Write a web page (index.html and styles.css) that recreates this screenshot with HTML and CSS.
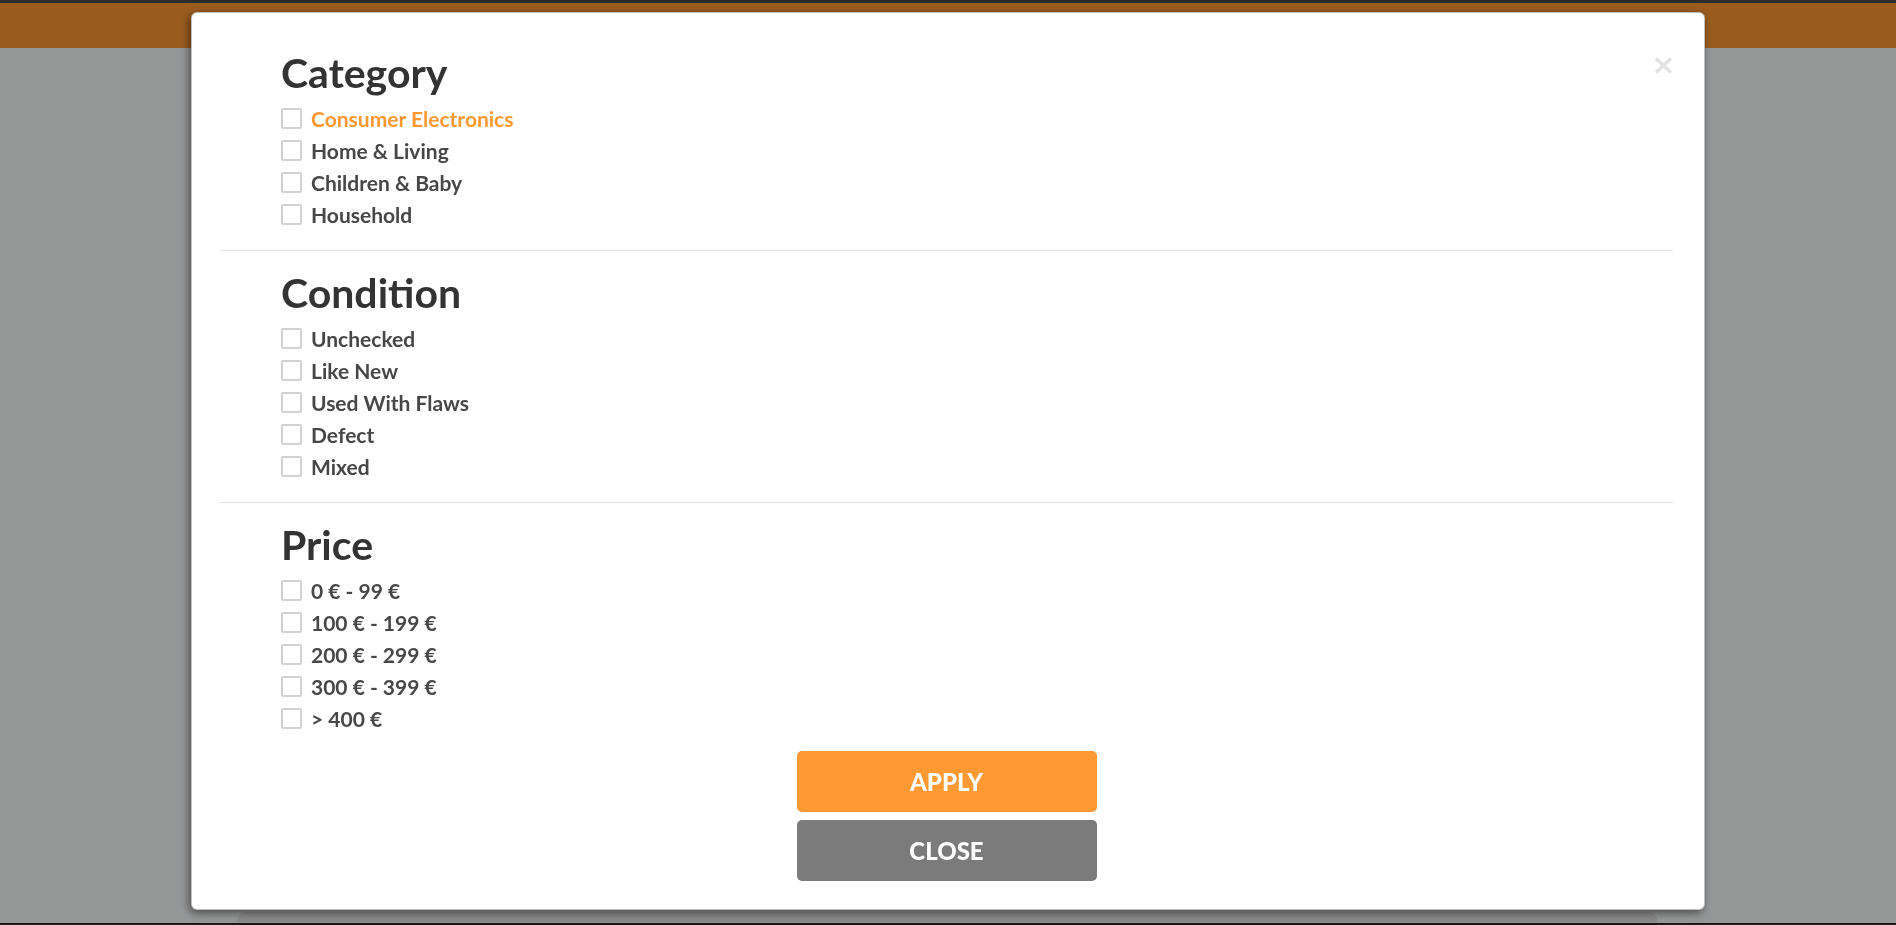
FILE: index.html
```html
<!DOCTYPE html>
<html lang="en">
<head>
<meta charset="utf-8">
<title>Filter</title>
<link rel="stylesheet" href="styles.css">
</head>
<body>
<header class="topbar"></header>
<main class="page">
  <div class="hero"></div>
  <div class="cards">
    <div class="card"></div>
  </div>
  <div class="strip"></div>
</main>

<div class="backdrop"></div>

<div class="modal" role="dialog">
  <button class="modal-x" aria-label="Close">
    <svg width="19" height="17" viewBox="0 0 19 17"><path d="M2 1.5 L17 15.5 M17 1.5 L2 15.5" stroke="#e2e2e2" stroke-width="3.4" stroke-linecap="butt" fill="none"/></svg>
  </button>
  <div class="modal-body">
    <section class="group">
      <h2 class="group-title">Category</h2>
      <ul class="opts">
        <li class="opt active"><span class="box"></span><span>Consumer Electronics</span></li>
        <li class="opt"><span class="box"></span><span>Home &amp; Living</span></li>
        <li class="opt"><span class="box"></span><span>Children &amp; Baby</span></li>
        <li class="opt"><span class="box"></span><span>Household</span></li>
      </ul>
    </section>
    <section class="group">
      <h2 class="group-title">Condition</h2>
      <ul class="opts">
        <li class="opt"><span class="box"></span><span>Unchecked</span></li>
        <li class="opt"><span class="box"></span><span>Like New</span></li>
        <li class="opt"><span class="box"></span><span>Used With Flaws</span></li>
        <li class="opt"><span class="box"></span><span>Defect</span></li>
        <li class="opt"><span class="box"></span><span>Mixed</span></li>
      </ul>
    </section>
    <section class="group last">
      <h2 class="group-title">Price</h2>
      <ul class="opts">
        <li class="opt"><span class="box"></span><span>0 € - 99 €</span></li>
        <li class="opt"><span class="box"></span><span>100 € - 199 €</span></li>
        <li class="opt"><span class="box"></span><span>200 € - 299 €</span></li>
        <li class="opt"><span class="box"></span><span>300 € - 399 €</span></li>
        <li class="opt"><span class="box"></span><span>&gt; 400 €</span></li>
      </ul>
    </section>
    <div class="actions">
      <button class="btn btn-apply">Apply</button>
      <button class="btn btn-close">Close</button>
    </div>
  </div>
</div>
</body>
</html>
```
FILE: styles.css
```css
* { box-sizing: border-box; }
html, body { margin: 0; padding: 0; }
body {
  background: #f9fafb;
  font-family: Lato, "Liberation Sans", sans-serif;
  overflow: hidden;
  height: 925px;
}
.topbar {
  height: 48px;
  background: #ff9933;
  border-top: 3px solid #484848;
}
.hero { height: 864px; }
.cards {
  display: flex;
  padding: 0 238px 0 237px;
  height: 11px;
}
.card {
  flex: 1;
  background: #e6e6e6;
  border-radius: 10px 10px 0 0;
}
.strip { height: 2px; background: #2a2a2a; }

.backdrop {
  position: fixed;
  inset: 0;
  background: rgba(0, 0, 0, 0.4);
}
.modal {
  position: fixed;
  top: 12px;
  left: 191px;
  width: 1514px;
  height: 898px;
  background: #fff;
  border: 1px solid rgba(0, 0, 0, 0.25);
  border-radius: 6px;
  box-shadow: -2px 3px 8px rgba(0, 0, 0, 0.5);
}
.modal-x {
  position: absolute;
  top: 44px;
  right: 31px;
  padding: 0;
  border: 0;
  background: none;
  line-height: 0;
}
.modal-body {
  padding: 18px 31px 0 28px;
}
.group {
  padding: 19px 0 20px 61px;
  border-bottom: 1px solid #e5e5e5;
}
.group.last {
  border-bottom: 0;
  padding-bottom: 17px;
}
.group-title {
  margin: 0 0 6px;
  font-size: 41px;
  line-height: 46px;
  font-weight: 700;
  color: #333;
}
.opts { list-style: none; margin: 0; padding: 0; }
.opt {
  display: flex;
  align-items: center;
  gap: 9px;
  height: 32px;
  font-size: 21px;
  font-weight: 700;
  color: #474747;
}
.opt.active { color: #ff9933; }
.box {
  width: 21px;
  height: 21px;
  border: 2px solid #d2d2d2;
  border-radius: 2px;
  background: #fff;
  flex: none;
}
.actions {
  display: flex;
  flex-direction: column;
  align-items: center;
  gap: 8px;
}
.btn {
  width: 300px;
  height: 61px;
  border: 0;
  border-radius: 5px;
  color: #fff;
  font-family: Lato, "Liberation Sans", sans-serif;
  font-size: 24px;
  font-weight: 900;
  text-transform: uppercase;
  padding: 0;
}
.btn-apply { background: #ff9933; }
.btn-close { background: #7b7b7b; }
```
